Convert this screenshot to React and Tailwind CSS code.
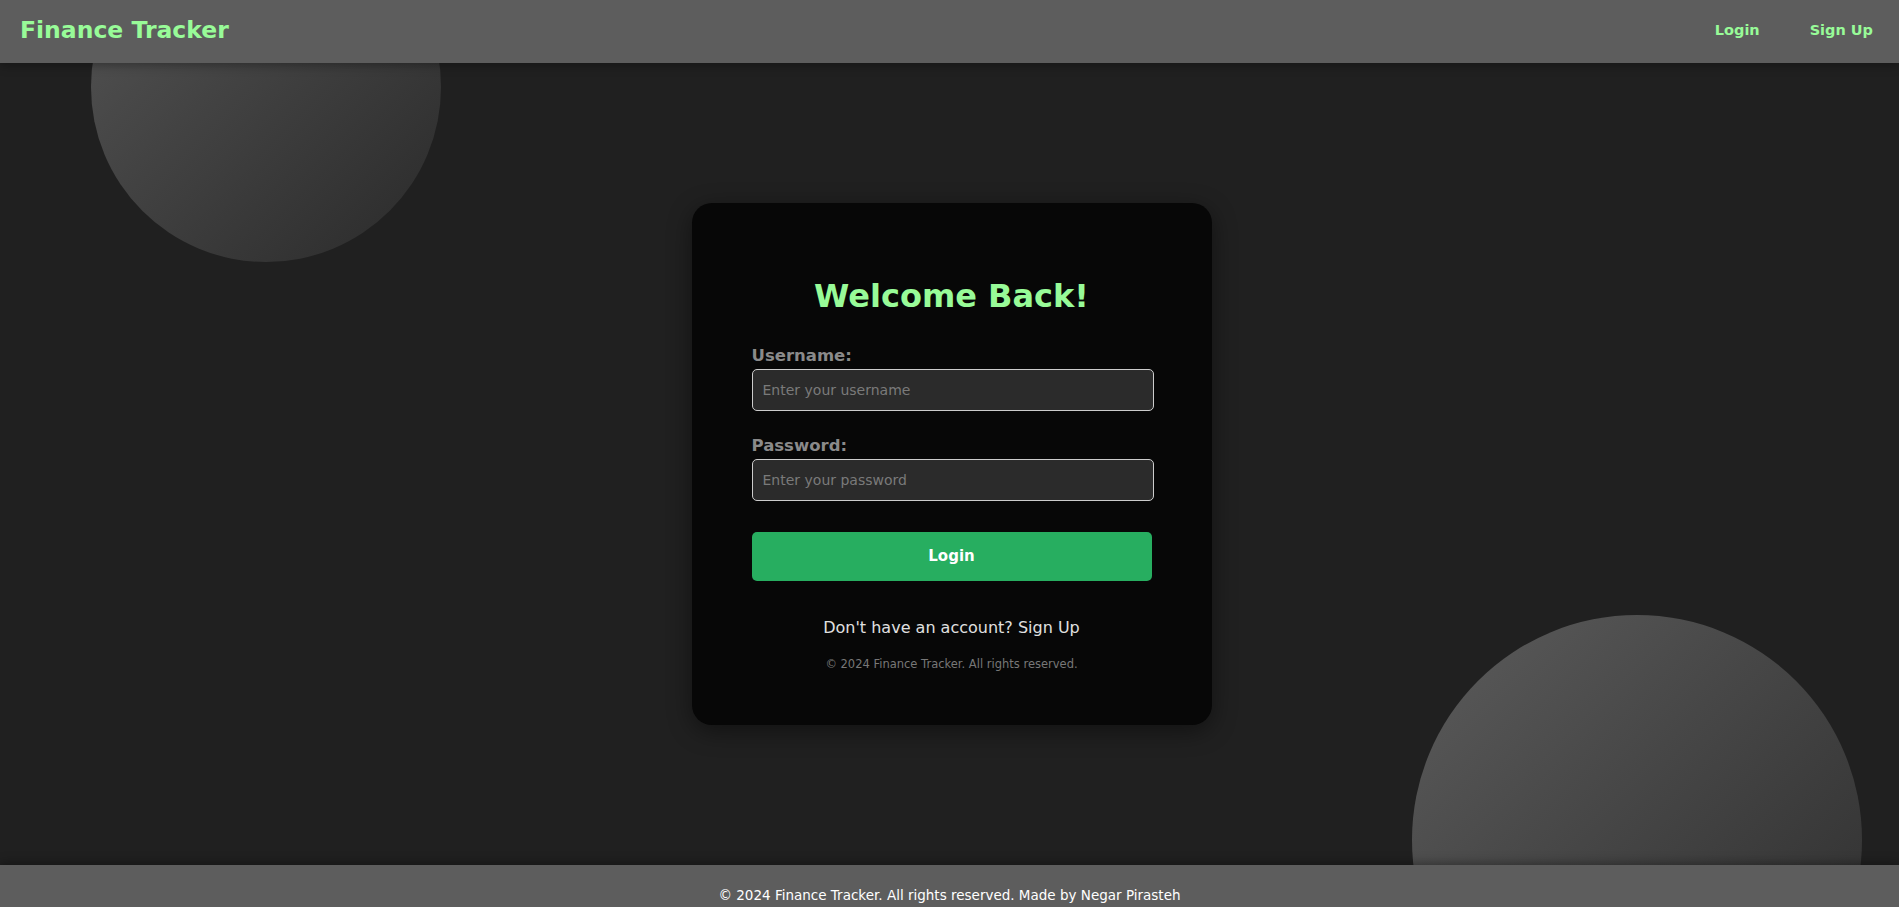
import { useState } from "react";

const FONT = { fontFamily: '"DejaVu Sans", "Noto Sans", sans-serif' };

// --- Header ---
const Header = () => (
  <header className="relative z-10 h-[63px] bg-[#5d5d5d] flex items-center justify-between pl-5 pr-[26px] pb-[2px] shadow-[0_2px_10px_rgba(0,0,0,0.35)]">
    <a href="/" className="text-[23.5px] font-bold text-[#98fb98]">
      Finance Tracker
    </a>
    <nav className="flex items-center gap-[50px] text-[14.5px] font-bold text-[#98fb98]">
      <a href="/login">Login</a>
      <a href="/signup">Sign Up</a>
    </nav>
  </header>
);

// --- Login Card ---
const Field = ({ label, type, placeholder, value, onChange }) => (
  <div className="flex flex-col">
    <label className="text-[16.5px] leading-[24px] font-bold text-[#8a8a8a] mb-px">{label}</label>
    <input
      type={type}
      value={value}
      onChange={onChange}
      placeholder={placeholder}
      className="h-[42px] w-[402px] px-[10px] rounded-[5px] border border-[#cccccc] bg-[#2b2b2b] text-[14px] text-white placeholder:text-[#7a7a7a] outline-none"
    />
  </div>
);

const LoginCard = () => {
  const [username, setUsername] = useState("");
  const [password, setPassword] = useState("");

  return (
    <div className="w-[520px] bg-[#070707] rounded-[20px] px-[60px] pt-[73px] pb-[51px] shadow-[0_6px_24px_rgba(0,0,0,0.45)]">
      <h1 className="text-[32px] leading-[40px] font-bold text-[#98fb98] text-center mb-[28px]">
        Welcome Back!
      </h1>
      <form onSubmit={(e) => e.preventDefault()}>
        <div className="mb-[23px]">
          <Field
            label="Username:"
            type="text"
            placeholder="Enter your username"
            value={username}
            onChange={(e) => setUsername(e.target.value)}
          />
        </div>
        <Field
          label="Password:"
          type="password"
          placeholder="Enter your password"
          value={password}
          onChange={(e) => setPassword(e.target.value)}
        />
        <button
          type="submit"
          className="mt-[31px] w-[400px] h-[49px] rounded-[5px] bg-[#27ae60] text-white text-[15px] font-bold"
        >
          Login
        </button>
      </form>
      <p className="mt-[35px] text-center text-[16px] leading-[24px] text-[#e0e0e0]">
        Don't have an account? <a href="/signup">Sign Up</a>
      </p>
      <p className="mt-[14px] text-center text-[11.5px] leading-[20px] text-[#777777]">
        © 2024 Finance Tracker. All rights reserved.
      </p>
    </div>
  );
};

export default function App() {
  return (
    <div className="relative min-h-screen bg-[#202020] overflow-hidden" style={FONT}>
      {/* decorative circles */}
      <div className="absolute left-[91px] top-[-88px] w-[350px] h-[350px] rounded-full bg-linear-to-br from-[#575757] to-[#2a2a2a]" />
      <div className="absolute left-[1412px] top-[615px] w-[450px] h-[450px] rounded-full bg-linear-to-br from-[#5c5c5c] to-[#2c2c2c]" />

      <Header />

      <main className="relative h-[802px] flex items-center justify-center pl-[4px]">
        <LoginCard />
      </main>

      <footer className="relative z-10 bg-[#5d5d5d] pt-[18px] pb-[18px] text-center text-[13.5px] leading-[24px] text-white shadow-[0_-2px_10px_rgba(0,0,0,0.35)]">
        © 2024 Finance Tracker. All rights reserved. Made by Negar Pirasteh
      </footer>
    </div>
  );
}
